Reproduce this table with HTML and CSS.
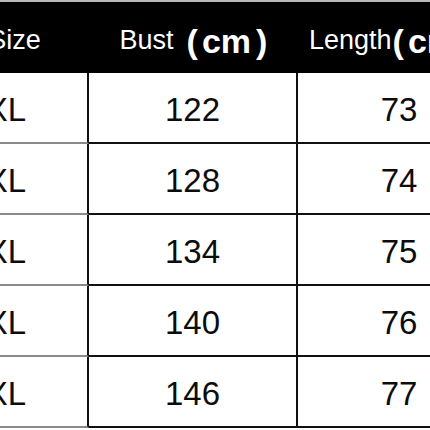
FILE: index.html
```html
<!DOCTYPE html>
<html>
<head>
<meta charset="utf-8">
<link rel="stylesheet" href="styles.css">
</head>
<body>
<div class="frame">
  <div class="chart">
    <div class="row head">
      <div class="cell c1">Size</div>
      <div class="cell c2">Bust<span class="unit"><span class="po">(</span>cm<span class="pc">)</span></span></div>
      <div class="cell c3">Length<span class="unit tight"><span class="po">(</span>cm<span class="pc">)</span></span></div>
    </div>
    <div class="row">
      <div class="cell c1">XL</div>
      <div class="cell c2">122</div>
      <div class="cell c3">73</div>
    </div>
    <div class="row">
      <div class="cell c1">XL</div>
      <div class="cell c2">128</div>
      <div class="cell c3">74</div>
    </div>
    <div class="row">
      <div class="cell c1">XL</div>
      <div class="cell c2">134</div>
      <div class="cell c3">75</div>
    </div>
    <div class="row">
      <div class="cell c1">XL</div>
      <div class="cell c2">140</div>
      <div class="cell c3">76</div>
    </div>
    <div class="row">
      <div class="cell c1">XL</div>
      <div class="cell c2">146</div>
      <div class="cell c3">77</div>
    </div>
  </div>
</div>
</body>
</html>
```

FILE: styles.css
```css
html, body {
  margin: 0;
  padding: 0;
  background: #fff;
}

.frame {
  width: 430px;
  height: 430px;
  overflow: hidden;
  background: #fff;
  border-top: 2px solid #b8b8b8;
  box-sizing: border-box;
}

.chart {
  margin-left: -60px;
  width: 560px;
  font-family: "Liberation Sans", Arial, sans-serif;
}

.row {
  display: grid;
  grid-template-columns: 149px 209px 202px;
  height: 71px;
  box-sizing: border-box;
}

.row.head {
  background: #000;
  color: #fff;
  height: 71px;
}

.cell {
  display: flex;
  align-items: center;
  justify-content: center;
  box-sizing: border-box;
  font-size: 33px;
  color: #0c0c0c;
  padding-top: 5px;
  border-bottom: 2px solid #111;
  white-space: nowrap;
}

.row .c1,
.row .c2 {
  border-right: 2px solid #111;
}

.row .c1 {
  justify-content: flex-end;
  padding-right: 61px;
  border-bottom-color: #8a8a8a;
}

.row.head .cell {
  color: #fff;
  font-size: 27px;
  border: none;
  padding-top: 5px;
}

.row.head .c1 {
  justify-content: center;
  padding-right: 0;
}

.row.head .c3 {
  justify-content: flex-start;
  padding-left: 11px;
}

.unit {
  font-weight: bold;
  font-size: 34px;
  margin-left: 13px;
  position: relative;
  top: 1px;
}

.unit.tight {
  margin-left: 1px;
}

.po {
  margin-right: 4px;
}

.pc {
  margin-left: 5px;
}
```
